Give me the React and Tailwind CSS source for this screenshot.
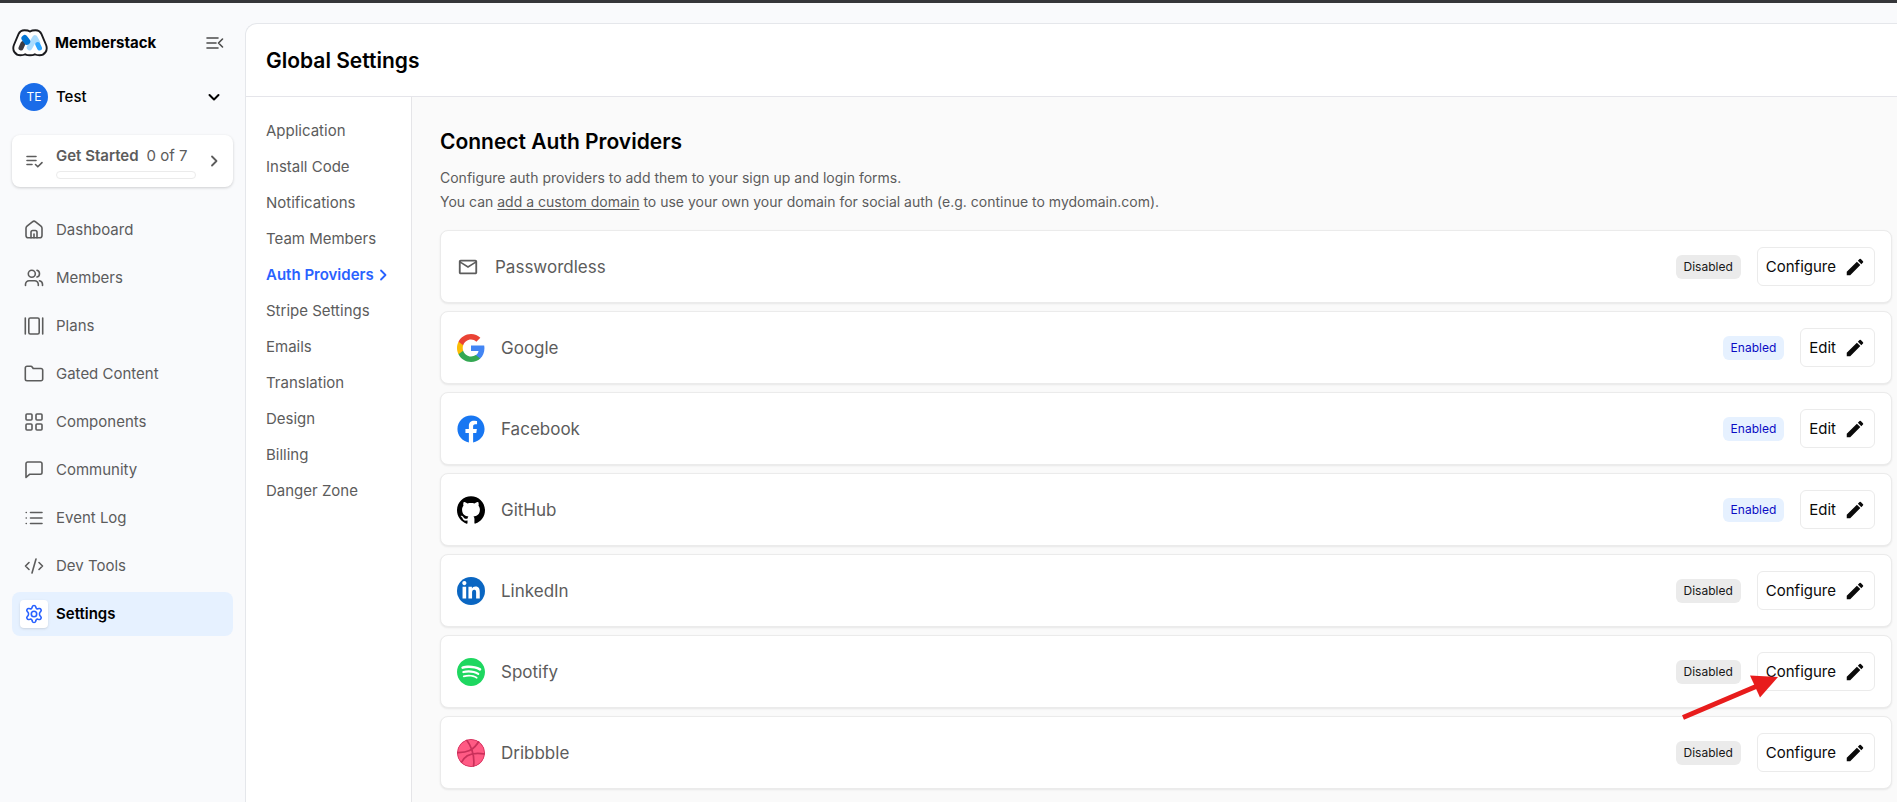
import React from 'react';
import { MdEdit, MdMailOutline } from 'react-icons/md';
import { SiGithub, SiSpotify } from 'react-icons/si';
import { FaFacebook, FaLinkedinIn } from 'react-icons/fa';

const Stroke = ({ children, className = 'size-5', width = 1.6 }) => (
  <svg
    viewBox="0 0 20 20"
    className={className}
    fill="none"
    stroke="currentColor"
    strokeWidth={width}
    strokeLinecap="round"
    strokeLinejoin="round"
    aria-hidden="true"
  >
    {children}
  </svg>
);

const navItems = [
  {
    label: 'Dashboard',
    icon: (
      <>
        <path d="M2 8.200c0-.8.400-1.500 1-2l5.400-4.400a2.500 2.500 0 0 1 3.200 0L17 6.200c.6.500 1 1.200 1 2v7.300a2.300 2.300 0 0 1-2.300 2.300H4.300A2.300 2.300 0 0 1 2 15.500z" />
        <path d="M7 17.800v-5.600c0-1 .7-1.700 1.700-1.700h2.600c1 0 1.700.7 1.700 1.700v5.600M10 14v3.800" />
      </>
    ),
  },
  {
    label: 'Members',
    icon: (
      <>
        <circle cx="7.800" cy="5.700" r="3.500" />
        <path d="M1.500 17.500v-1.200a3.600 3.600 0 0 1 3.600-3.600h5.600a3.600 3.600 0 0 1 3.600 3.600v1.200M13 2.300a3.500 3.500 0 0 1 0 6.700M15.500 12.800a3.600 3.600 0 0 1 3 3.500v1.200" />
      </>
    ),
  },
  {
    label: 'Plans',
    icon: (
      <>
        <rect x="4.800" y="2" width="10.400" height="16" rx="1.500" />
        <path d="M1.300 2v16M18.700 2v16" />
      </>
    ),
  },
  {
    label: 'Gated Content',
    icon: (
      <path d="M1.300 4a1.700 1.700 0 0 1 1.700-1.700h3.800c.6 0 1.100.2 1.400.7l1 1.500H17A1.700 1.700 0 0 1 18.700 6.200V15A1.700 1.700 0 0 1 17 16.700H3A1.700 1.700 0 0 1 1.300 15z" />
    ),
  },
  {
    label: 'Components',
    icon: (
      <>
        <rect x="2" y="2" width="6" height="6" rx="1" />
        <rect x="12" y="2" width="6" height="6" rx="1" />
        <rect x="2" y="12" width="6" height="6" rx="1" />
        <rect x="12" y="12" width="6" height="6" rx="1" />
      </>
    ),
  },
  {
    label: 'Community',
    icon: (
      <path d="M2 3.700A1.700 1.700 0 0 1 3.700 2h12.600A1.700 1.700 0 0 1 18 3.700v8.900a1.700 1.700 0 0 1-1.700 1.700H5.500L2 17.500z" />
    ),
  },
  {
    label: 'Event Log',
    icon: <path d="M6.500 4.500h11.500M6.500 10h11.500M6.500 15.500h11.500M2.200 4.500h.1M2.200 10h.1M2.200 15.500h.1" />,
  },
  {
    label: 'Dev Tools',
    icon: <path d="M5 6.500 1.500 10 5 13.500M15 6.500l3.500 3.500-3.500 3.500M12 3 8 17" />,
  },
  {
    label: 'Settings',
    active: true,
    icon: (
      <>
        <circle cx="10" cy="10" r="2.700" />
        <path d="M8.300 2.600c.4-1.500 3-1.500 3.400 0l.3 1.100c.2.900 1.200 1.400 2 1.100l1.100-.3c1.500-.4 2.800 1.800 1.700 2.900l-.8.900c-.7.7-.7 2.700 0 3.400l.8.900c1.100 1.100-.2 3.300-1.700 2.900l-1.100-.3c-.8-.3-1.800.2-2 1.100l-.3 1.100c-.4 1.500-3 1.500-3.400 0L8 16.300c-.2-.9-1.200-1.400-2-1.100l-1.100.3c-1.500.4-2.800-1.800-1.700-2.900l.8-.9c.7-.7.7-2.700 0-3.400l-.8-.9c-1.100-1.100.2-3.300 1.700-2.900l1.100.3c.8.3 1.800-.2 2-1.100z" />
      </>
    ),
  },
];

const settingsLinks = [
  'Application',
  'Install Code',
  'Notifications',
  'Team Members',
  'Auth Providers',
  'Stripe Settings',
  'Emails',
  'Translation',
  'Design',
  'Billing',
  'Danger Zone',
];

const GoogleLogo = () => (
  <svg viewBox="1 1 22 22" className="size-7" aria-hidden="true">
    <path fill="#4285F4" d="M22.560 12.250c0-.78-.07-1.530-.2-2.250H12v4.260h5.920c-.26 1.370-1.040 2.530-2.210 3.310v2.770h3.570c2.080-1.920 3.280-4.740 3.280-8.090z" />
    <path fill="#34A853" d="M12 23c2.970 0 5.460-.98 7.280-2.660l-3.570-2.770c-.98.66-2.230 1.060-3.710 1.060-2.860 0-5.290-1.930-6.160-4.530H2.180v2.840C3.990 20.530 7.700 23 12 23z" />
    <path fill="#FBBC05" d="M5.840 14.090c-.22-.66-.35-1.360-.35-2.090s.13-1.430.35-2.090V7.070H2.180C1.430 8.550 1 10.220 1 12s.43 3.450 1.180 4.930l2.850-2.220.81-.62z" />
    <path fill="#EA4335" d="M12 5.380c1.620 0 3.060.56 4.210 1.640l3.150-3.150C17.450 2.090 14.970 1 12 1 7.700 1 3.990 3.470 2.180 7.070l3.660 2.840c.87-2.600 3.300-4.530 6.160-4.530z" />
  </svg>
);

const DribbbleLogo = () => (
  <svg viewBox="0 0 28 28" className="size-7" aria-hidden="true">
    <clipPath id="dribbble-ball">
      <circle cx="14" cy="14" r="14" />
    </clipPath>
    <g clipPath="url(#dribbble-ball)" fill="none" stroke="#c9305a" strokeWidth="1.700">
      <circle cx="14" cy="14" r="14" fill="#ff5a84" stroke="none" />
      <path d="M0 13.500c9 .3 17-1.500 22.500-12.500M9 0c6 8 9 17 7.500 28M4 24C8 15 17 13 28 15" />
      <circle cx="14" cy="14" r="13.600" strokeWidth="0.800" />
    </g>
  </svg>
);

const providers = [
  { name: 'Passwordless', enabled: false, logo: <MdMailOutline size={22} className="text-[#5c5c5c]" /> },
  { name: 'Google', enabled: true, logo: <GoogleLogo /> },
  { name: 'Facebook', enabled: true, logo: <FaFacebook size={28} className="text-[#1877f2]" /> },
  { name: 'GitHub', enabled: true, logo: <SiGithub size={28} className="text-black" /> },
  {
    name: 'LinkedIn',
    enabled: false,
    logo: (
      <span className="flex size-7 items-center justify-center rounded-full bg-[#0a66c2]">
        <FaLinkedinIn size={20} className="text-white" />
      </span>
    ),
  },
  { name: 'Spotify', enabled: false, pointer: true, logo: <SiSpotify size={28} className="text-[#1ed760]" /> },
  { name: 'Dribbble', enabled: false, logo: <DribbbleLogo /> },
];

const BrandLogo = () => (
  <svg viewBox="0 0 36 28" className="h-7 w-9 shrink-0" fill="none" strokeLinecap="round" aria-hidden="true">
    <path
      d="M12.500 1.200c2.300 0 4.200.4 5.500 1.300 1.300-.9 3.200-1.300 5.500-1.300 3 0 4.900 1.300 6 4l4.600 10.800c2 5.300-1.300 10.300-6.600 10.300-2 0-3.500-.3-4.700-1-1.300.7-2.800 1-4.800 1s-3.500-.3-4.800-1c-1.200.7-2.700 1-4.700 1-5.300 0-8.600-5-6.600-10.300L6.500 5.200c1.100-2.700 3-4 6-4z"
      fill="#fff"
      stroke="#1b1b1f"
      strokeWidth="1.900"
    />
    <path d="M9 19l2-4.500" stroke="#3d3c42" strokeWidth="5" />
    <path d="M17.500 18.500l5.500-9.500 2.500 4.500" stroke="#a9dcff" strokeWidth="5.500" strokeLinejoin="round" />
    <path d="M12.700 9.300l2.300 3.200" stroke="#0074d4" strokeWidth="6.500" />
    <path d="M25.800 15.500l1.700 3.500" stroke="#2ea5ff" strokeWidth="5" />
  </svg>
);

const Sidebar = () => (
  <aside className="w-[245px] shrink-0 px-3 pt-[22px]">
    <div className="flex h-9 items-center gap-[7px] pr-2">
      <BrandLogo />
      <span className="flex-1 text-[15px] font-bold text-black">Memberstack</span>
      <button type="button" aria-label="Collapse sidebar" className="text-[#4b4b4b]">
        <Stroke>
          <path d="M2 5h11M2 10h9M2 15h11M17.500 6l-4 4 4 4" />
        </Stroke>
      </button>
    </div>

    <button type="button" className="mt-[18px] flex h-9 w-full items-center gap-2 px-2 text-left">
      <span className="flex size-7 items-center justify-center rounded-full bg-[#1a6ce8] text-[12px] text-white">
        TE
      </span>
      <span className="flex-1 text-[15px] font-medium text-black">Test</span>
      <Stroke className="mr-px size-5 text-black" width={2}>
        <path d="M5.500 8l4.500 4.500L14.500 8" />
      </Stroke>
    </button>

    <button
      type="button"
      className="mt-5 flex h-[52px] w-full items-center rounded-lg bg-white px-3 text-left text-[#5c5c5c] shadow-[0_1px_3px_rgba(0,0,0,0.18)]"
    >
      <Stroke className="size-5">
        <path d="M3 5.500h9M3 9.500h9M3 13.500h5M11.500 13.500l2.300 2.300 4.200-4.200" />
      </Stroke>
      <span className="ml-3 flex flex-1 flex-col gap-[5px] pt-[2px]">
        <span className="flex gap-2 text-[15px] leading-5">
          <span className="font-semibold">Get Started</span>
          <span>0 of 7</span>
        </span>
        <span className="block h-2 w-[140px] rounded-[4px] border border-[#ebebeb]" />
      </span>
      <Stroke className="mr-[-3px] size-5" width={1.8}>
        <path d="M8 5.500l4.500 4.500L8 14.500" />
      </Stroke>
    </button>

    <nav className="mt-[21px] flex flex-col gap-1">
      {navItems.map((item) => (
        <a
          key={item.label}
          href="#"
          className={
            item.active
              ? 'flex h-11 items-center gap-2 rounded-lg bg-[#e6f1ff] px-2 text-[15px] font-semibold text-black'
              : 'flex h-11 items-center gap-2 rounded-lg px-2 text-[15px] text-[#5c5c5c]'
          }
        >
          <span
            className={
              item.active
                ? 'flex size-7 items-center justify-center rounded-sm bg-white text-[#2962ff] shadow-sm'
                : 'flex size-7 items-center justify-center'
            }
          >
            <Stroke>{item.icon}</Stroke>
          </span>
          {item.label}
        </a>
      ))}
    </nav>
  </aside>
);

const ProviderRow = ({ provider }) => (
  <li className="relative flex h-[73px] items-center rounded-lg border border-[#ebebeb] bg-white px-4 shadow-[0_1px_2px_rgba(0,0,0,0.08)]">
    {provider.logo}
    <span className="ml-4 flex-1 pt-0.5 text-[17px] text-[#5c5c5c]">{provider.name}</span>
    <span
      className={
        provider.enabled
          ? 'flex h-6 items-center rounded-md bg-[#e6f1ff] px-2 text-[12px] text-[#0b0bc4]'
          : 'flex h-6 items-center rounded-md bg-[#ebebeb] px-2 text-[12px] text-[#171717]'
      }
    >
      {provider.enabled ? 'Enabled' : 'Disabled'}
    </span>
    <button
      type="button"
      className="ml-4 flex h-[39px] items-center gap-2 rounded-md border border-[#ebebeb] bg-white px-2 text-[15px] text-[#0a0a0a]"
    >
      <span className="pt-0.5">{provider.enabled ? 'Edit' : 'Configure'}</span>
      <MdEdit size={22} />
    </button>

    {provider.pointer && (
      <svg viewBox="0 0 100 54" className="absolute top-[35px] right-[111px] z-10 h-[54px] w-[100px]" aria-hidden="true">
        <path d="M3 46.500 76 15.500" stroke="#e81c1c" strokeWidth="5" />
        <path d="M70 4.500 98 6 80 26.500z" fill="#e81c1c" />
      </svg>
    )}
  </li>
);

const App = () => (
  <div className="flex min-h-screen flex-col bg-[#f9fafc] font-['Inter','Liberation_Sans',sans-serif] antialiased">
    <div className="h-[3px] bg-[#35363a]" />
    <div className="flex flex-1">
      <Sidebar />

      <main className="mt-5 flex min-w-0 flex-1 flex-col rounded-tl-xl border-t border-l border-[#e5e7eb] bg-white">
        <header className="flex h-[73px] items-center border-b border-[#e5e5ea] px-5 pt-0.5">
          <h1 className="text-[21px] font-semibold text-black">Global Settings</h1>
        </header>

        <div className="flex flex-1">
          <nav className="flex w-[166px] shrink-0 flex-col border-r border-[#e5e5e8] px-5 pt-4">
            {settingsLinks.map((label) =>
              label === 'Auth Providers' ? (
                <a key={label} href="#" className="flex h-9 items-center text-[15px] font-semibold whitespace-nowrap text-[#2962ff]">
                  {label}
                  <Stroke className="size-5 shrink-0" width={1.8}>
                    <path d="M7 5.500l4.500 4.500L7 14.500" />
                  </Stroke>
                </a>
              ) : (
                <a key={label} href="#" className="flex h-9 items-center text-[15px] whitespace-nowrap text-[#5c5c5c]">
                  {label}
                </a>
              )
            )}
          </nav>

          <section className="min-w-0 flex-1 bg-[#fafafa] pt-[27px] pr-[5px] pb-3 pl-7">
            <h2 className="text-[21px] leading-9 font-semibold text-black">Connect Auth Providers</h2>
            <p className="mt-1.5 text-[14px] leading-6 text-[#5c5c5c]">
              Configure auth providers to add them to your sign up and login forms.
              <br />
              You can{' '}
              <a href="#" className="underline underline-offset-2">
                add a custom domain
              </a>{' '}
              to use your own your domain for social auth (e.g. continue to mydomain.com).
            </p>

            <ul className="mt-4 flex flex-col gap-2">
              {providers.map((provider) => (
                <ProviderRow key={provider.name} provider={provider} />
              ))}
            </ul>
          </section>
        </div>
      </main>
    </div>
  </div>
);

export default App;
